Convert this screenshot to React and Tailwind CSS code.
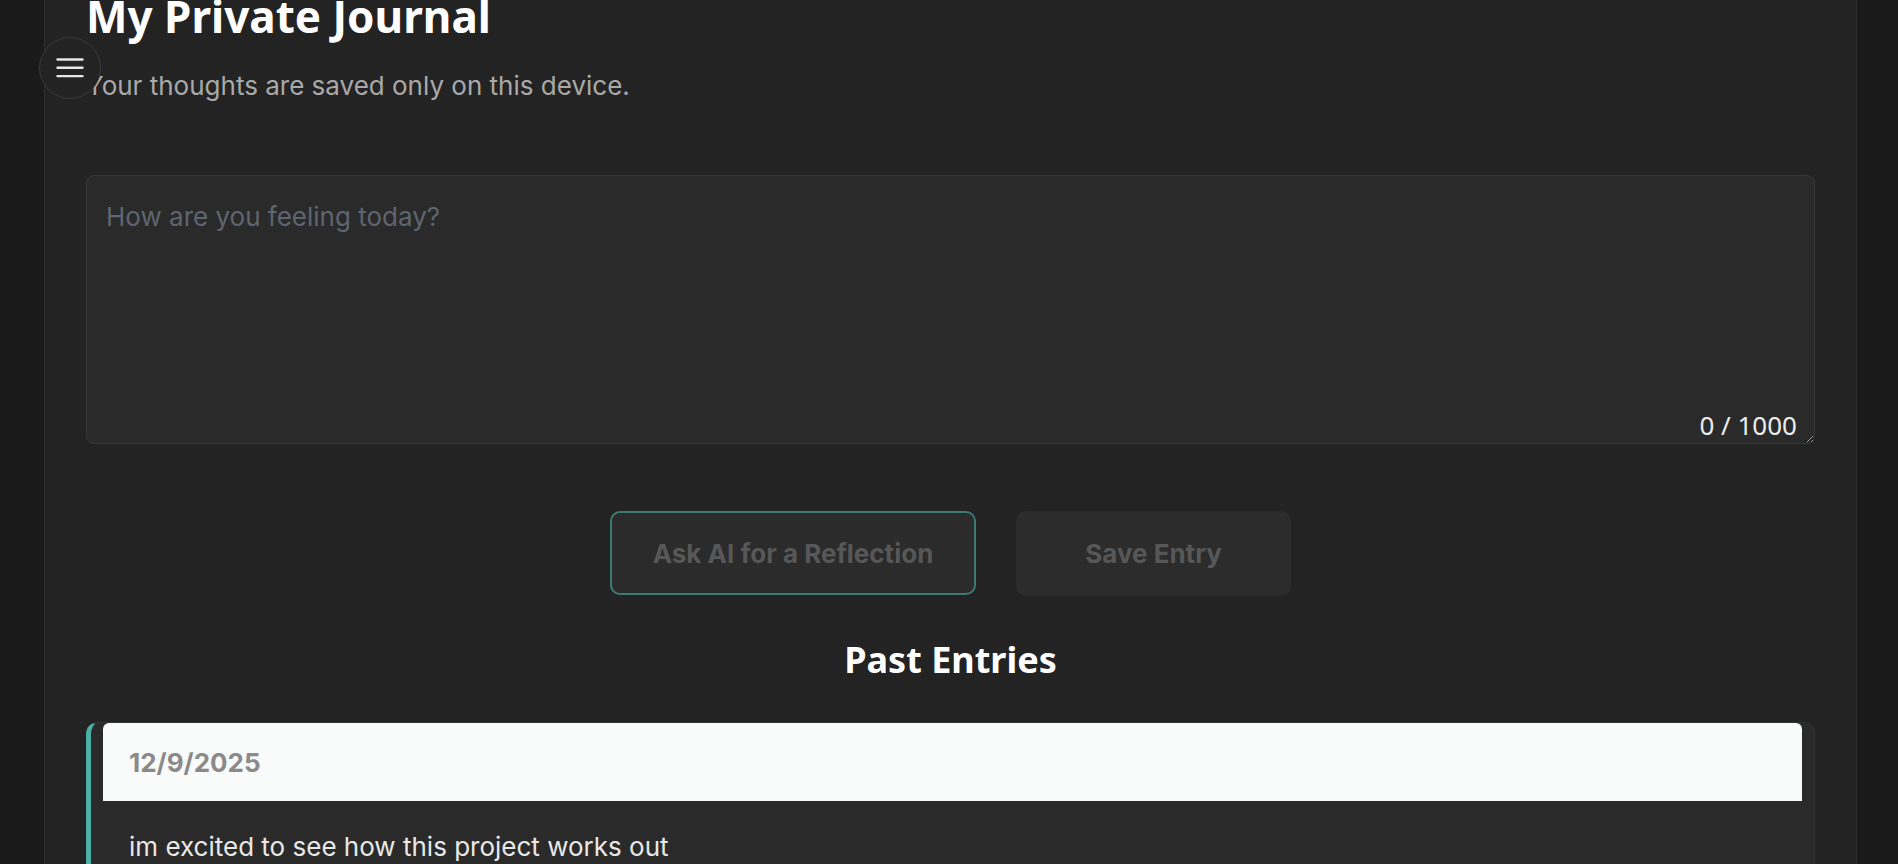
import React from "react";

export default function App() {
  return (
    <div className="h-[864px] overflow-hidden bg-[#1a1a1a]" style={{ fontFamily: "Inter, 'Liberation Sans', sans-serif" }}>
      <button
        aria-label="menu"
        className="fixed left-[39px] top-[37px] z-10 flex h-[62px] w-[62px] items-center justify-center rounded-full border border-[#3a3a3a] bg-[#232323]"
      >
        <svg width="28" height="22" viewBox="0 0 28 22" fill="none">
          <path d="M1.5 2.5h25M1.5 10.8h25M1.5 19.1h25" stroke="#e6e6e6" strokeWidth="2.4" strokeLinecap="round" />
        </svg>
      </button>

      <main className="ml-[44px] mr-[41px] min-h-[900px] border-x border-[#2f2f2f] bg-[#232323] px-[41px]">
        <h1
          className="mt-[-10px] text-[44px] font-bold leading-[52px] text-white"
          style={{ fontFamily: "'Noto Sans', 'Open Sans', sans-serif" }}
        >
          My Private Journal
        </h1>
        <p className="mt-[28px] text-[26px] leading-[32px] text-[#a9a9a9]">
          Your thoughts are saved only on this device.
        </p>

        <div className="relative mt-[73px]">
          <textarea
            placeholder="How are you feeling today?"
            className="block h-[269px] w-full rounded-lg border border-[#383838] bg-[#2a2a2a] px-[19px] py-[20px] text-[26px] leading-[1.6] text-[#e8e8e8] outline-none placeholder:text-[#5f6570]"
          />
          <span
            className="absolute bottom-[6px] right-[18px] text-[26px] leading-none text-[#ececec]"
            style={{ fontFamily: "'Noto Sans', 'Open Sans', sans-serif" }}
          >
            0 / 1000
          </span>
        </div>

        <div className="mt-[67px] flex justify-center gap-[40px]">
          <button className="flex h-[84px] w-[366px] items-center justify-center rounded-[10px] border-2 border-[#3d7b72] bg-[#2b2b2b] text-[26px] font-bold text-[#575757]">
            Ask AI for a Reflection
          </button>
          <button className="flex h-[85px] w-[275px] items-center justify-center rounded-[10px] bg-[#2c2c2c] text-[26px] font-bold text-[#575757]">
            Save Entry
          </button>
        </div>

        <h2
          className="mt-[42px] text-center text-[36px] font-bold leading-[44px] text-white"
          style={{ fontFamily: "'Noto Sans', 'Open Sans', sans-serif" }}
        >
          Past Entries
        </h2>

        <div className="mt-[40px] rounded-[12px] border border-[#333333] border-l-[5px] border-l-[#4db0a5] bg-[#2a2a2a]">
          <div className="mx-[12px] flex h-[78px] items-center rounded-t-[6px] bg-[#f9fbfa] pl-[26px]">
            <span className="text-[26px] font-bold text-[#8a8a8a]">12/9/2025</span>
          </div>
          <p className="pl-[38px] pt-[25px] pb-[30px] text-[26px] leading-[1.6] text-[#e8e8e8]">
            im excited to see how this project works out
          </p>
        </div>
      </main>
    </div>
  );
}
